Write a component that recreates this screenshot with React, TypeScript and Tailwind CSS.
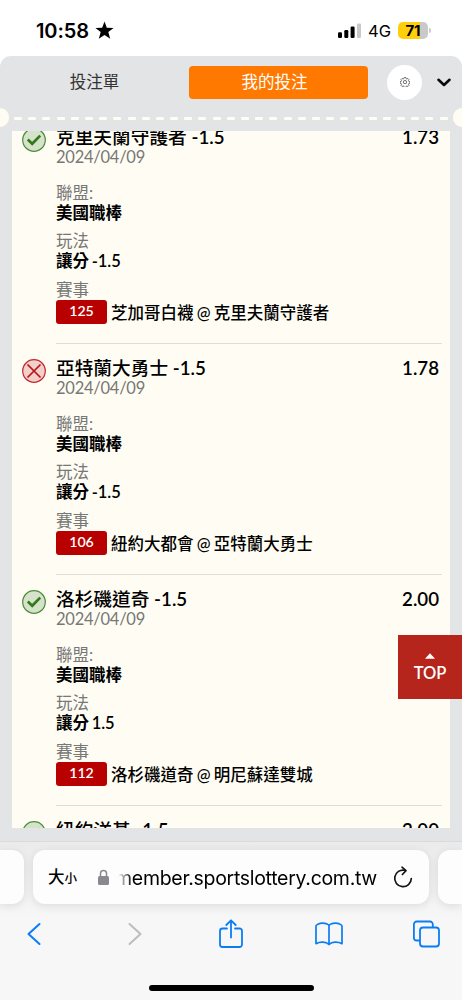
type Bet = {
  team: string;
  line: string;
  odds: string;
  won: boolean;
  play: string;
  code: string;
  match: string;
};

const bets: Bet[] = [
  { team: '克里夫蘭守護者', line: '-1.5', odds: '1.73', won: true, play: '讓分 -1.5', code: '125', match: '芝加哥白襪 @ 克里夫蘭守護者' },
  { team: '亞特蘭大勇士', line: '-1.5', odds: '1.78', won: false, play: '讓分 -1.5', code: '106', match: '紐約大都會 @ 亞特蘭大勇士' },
  { team: '洛杉磯道奇', line: '-1.5', odds: '2.00', won: true, play: '讓分 1.5', code: '112', match: '洛杉磯道奇 @ 明尼蘇達雙城' },
  { team: '紐約洋基', line: '-1.5', odds: '2.00', won: true, play: '讓分 -1.5', code: '118', match: '紐約洋基 @ 邁阿密馬林魚' },
];

const dashes = Array.from({ length: 31 }, (_, i) => i);

function StatusBar() {
  return (
    <div className="flex h-[56px] shrink-0 items-start pt-[19px] pl-[36px] font-['Inter','Noto_Sans_CJK_TC',sans-serif] text-black">
      <span className="w-[54px] text-[20px] leading-6 font-semibold tracking-[-0.1px]">10:58</span>
      <svg className="mt-[2px] ml-[5px]" width="19" height="19" viewBox="0 0 19 19">
        <path d="M9.5.4l2.300 6.300 6.800.2-5.300 4.200 1.900 6.600-5.700-3.800-5.700 3.800 1.900-6.600L.4 6.900l6.800-.2z" />
      </svg>
      <svg className="mt-[4px] ml-[224px]" width="23" height="16" viewBox="0 0 23 16">
        <rect x="0" y="9.3" width="4" height="5.7" rx="1.2" />
        <rect x="6.3" y="7" width="4" height="8" rx="1.2" />
        <rect x="12.6" y="3.6" width="4" height="11.4" rx="1.2" />
        <rect x="19" y="0.4" width="4" height="14.6" rx="1.2" fill="#c9c9cb" />
      </svg>
      <span className="ml-[7px] w-[23px] text-[16.5px] leading-6 whitespace-nowrap">4G</span>
      <span className="mt-[3px] ml-[7px] flex h-[17px] w-[30px] items-center justify-center rounded-[5px] bg-linear-to-r from-[#fecf0a] from-72% to-[#c9c9cb] to-72% pt-[1px] text-[15px] leading-4 font-bold">
        71
      </span>
      <span className="mt-[9px] ml-[1px] h-[5px] w-[2px] rounded-r-full bg-[#c9c9cb]" />
    </div>
  );
}

function SlipHeader() {
  return (
    <div className="flex h-[52px] items-center">
      <button className="w-[189px] text-center text-[16.5px] text-[#333]">投注單</button>
      <button className="h-[33px] w-[179px] rounded-[4px] bg-[#ff7900] pr-[8px] text-[16.5px] text-white">我的投注</button>
      <button className="ml-[19px] flex size-[35px] items-center justify-center rounded-full bg-white">
        <svg width="10" height="10" viewBox="0 0 20 20" fill="none" stroke="#444" strokeWidth="1.5">
          <path d="M8.4 1h3.2l.6 2.3 1.6.7 2-1.2 2.3 2.3-1.2 2 .7 1.6 2.3.6v3.2l-2.3.6-.7 1.6 1.2 2-2.3 2.3-2-1.2-1.6.7-.6 2.3H8.4l-.6-2.3-1.6-.7-2 1.2-2.3-2.3 1.2-2-.7-1.6L.1 12.5V9.3l2.3-.6.7-1.6-1.2-2 2.3-2.3 2 1.2 1.6-.7z" />
          <circle cx="10" cy="10.2" r="3.3" />
        </svg>
      </button>
      <svg className="ml-[15px]" width="14" height="9" viewBox="0 0 14 9" fill="none" stroke="#0b0b0f" strokeWidth="2.6" strokeLinecap="round" strokeLinejoin="round">
        <path d="M1.5 1.8L7 7l5.5-5.2" />
      </svg>
    </div>
  );
}

// Perforated edge of the ticket
function TearLine() {
  return (
    <div className="flex h-[19px] items-center justify-between overflow-hidden">
      <span className="h-[19px] w-[9px] shrink-0 rounded-r-full bg-[#fffdf3]" />
      <div className="mt-[2px] mr-[5px] ml-[5px] flex flex-1 justify-between">
        {dashes.map((i) => (
          <span key={i} className="h-[3px] w-[8px] rounded-[1px] bg-[#fffdf3]" />
        ))}
      </div>
      <span className="h-[19px] w-[9px] shrink-0 rounded-l-full bg-[#fffdf3]" />
    </div>
  );
}

function ResultIcon({ won }: { won: boolean }) {
  return won ? (
    <svg width="24" height="24" viewBox="0 0 24 24" fill="none">
      <circle cx="12" cy="12" r="11.3" fill="#d5e3ca" stroke="#4a8c3b" strokeWidth="1.2" />
      <path d="M5.8 11.6l4.4 4.2L18.2 7.600" stroke="#35791f" strokeWidth="2.7" />
    </svg>
  ) : (
    <svg width="24" height="24" viewBox="0 0 24 24" fill="none">
      <circle cx="12" cy="12" r="11.3" fill="#f3cfc9" stroke="#c4262b" strokeWidth="1.2" />
      <path d="M5.5 5.5l13 13M18.5 5.5l-13 13" stroke="#b8141c" strokeWidth="1.7" />
    </svg>
  );
}

function BetRow({ bet }: { bet: Bet }) {
  return (
    <div className="flex h-[231px] shrink-0 pr-[8px] pl-[10px]">
      <div className="w-[34px] shrink-0 pt-[15px]">
        <ResultIcon won={bet.won} />
      </div>
      <div className="flex-1 border-b border-[#dedddb] pt-[12px] whitespace-nowrap">
        <div className="flex justify-between pr-[3px] text-[18.7px] leading-[24px] font-semibold text-black">
          <span>
            <span className="font-medium">{bet.team}</span> {bet.line}
          </span>
          <span>{bet.odds}</span>
        </div>
        <div className="text-[16.5px] leading-[16px] tracking-[-0.25px] text-[#777]">2024/04/09</div>
        <div className="mt-[18px] text-[16.5px] leading-[20px] text-[#777]">聯盟:</div>
        <div className="text-[16.5px] leading-[21px] font-semibold text-black">美國職棒</div>
        <div className="mt-[7px] text-[16.5px] leading-[20px] text-[#777]">玩法</div>
        <div className="text-[16.5px] leading-[21px] font-semibold tracking-[-0.1px] text-black [word-spacing:-1px]">{bet.play}</div>
        <div className="mt-[8px] text-[16.5px] leading-[20px] text-[#777]">賽事</div>
        <div className="flex h-[24px] items-center gap-[4px]">
          <span className="flex h-[24px] w-[51px] items-center justify-center rounded-[3px] bg-[#b80000] pb-[2px] text-[14.2px] font-semibold text-white">
            {bet.code}
          </span>
          <span className="pt-[2px] text-[16.5px] font-medium text-black [word-spacing:-1px]">{bet.match}</span>
        </div>
      </div>
    </div>
  );
}

function AddressBar() {
  return (
    <div className="flex h-[54px] justify-between">
      <div className="w-[24px] rounded-r-[12px] bg-[#fdfdfd] shadow-[0_2px_10px_rgba(0,0,0,0.1)]" />
      <div className="flex w-[396px] items-center rounded-[12px] bg-[#fdfdfd] pl-[15px] text-black shadow-[0_2px_10px_rgba(0,0,0,0.1)]">
        <span className="w-[50px] font-['Noto_Sans_CJK_TC',sans-serif] text-[16.5px] leading-6 font-medium">
          大<span className="text-[12.5px]">小</span>
        </span>
        <svg width="11" height="17" viewBox="0 0 11 17">
          <path d="M2.5 8V4.5a3 3 0 016 0V8" fill="none" stroke="#8a8a8e" strokeWidth="1.5" />
          <rect x="0" y="7" width="11" height="9" rx="1.5" fill="#8a8a8e" />
        </svg>
        <div className="ml-[9px] flex w-[259px] justify-end overflow-hidden mask-[linear-gradient(to_right,transparent,black_14px)] pt-[2px] font-['Inter',sans-serif] text-[19.5px] leading-7 tracking-[-0.3px] whitespace-nowrap">
          member.sportslottery.com.tw
        </div>
        <svg className="ml-[16px]" width="20" height="23" viewBox="0 0 20 23" fill="none" stroke="#151515" strokeWidth="1.7" strokeLinecap="round" strokeLinejoin="round">
          <path d="M12 4.3A8.3 8.3 0 1018.300 12.500" />
          <path d="M9 1.200l4 3.400-3.600 3.900" />
        </svg>
      </div>
      <div className="w-[24px] rounded-l-[12px] bg-[#fdfdfd] shadow-[0_2px_10px_rgba(0,0,0,0.1)]" />
    </div>
  );
}

function Toolbar() {
  return (
    <div className="flex h-[60px] items-center justify-between pr-[20px] pl-[19px]">
      <svg width="30" height="30" viewBox="0 0 30 30" fill="none" stroke="#0a7df5" strokeWidth="2" strokeLinecap="round" strokeLinejoin="round">
        <path d="M20.500 5L9.500 15l11 10" />
      </svg>
      <svg width="30" height="30" viewBox="0 0 30 30" fill="none" stroke="#bdbdbf" strokeWidth="2" strokeLinecap="round" strokeLinejoin="round">
        <path d="M12.500 5l11 10-11 10" />
      </svg>
      <svg width="30" height="30" viewBox="0 0 30 30" fill="none" stroke="#0a7df5" strokeWidth="1.8" strokeLinecap="round" strokeLinejoin="round">
        <path d="M11 9.500H6.500a2.500 2.500 0 00-2.500 2.500v13.500a2.500 2.500 0 002.500 2.500h17a2.500 2.500 0 002.500-2.500V12a2.500 2.500 0 00-2.500-2.500H19" />
        <path d="M15 18.500V1.500M10.300 6L15 1.300 19.700 6" />
      </svg>
      <svg width="30" height="30" viewBox="0 0 30 30" fill="none" stroke="#0a7df5" strokeWidth="1.7" strokeLinecap="round" strokeLinejoin="round">
        <path d="M15 25.500c-3-3-9-3-13-.8V7c0-1 3-2.800 6.500-2.800S15 5.500 15 7c0-1.500 3-2.800 6.500-2.800S28 6 28 7v17.700c-4-2.200-10-2.200-13 .8zM15 7v18.500" />
      </svg>
      <svg width="30" height="30" viewBox="0 0 30 30" fill="none" stroke="#0a7df5" strokeWidth="1.8" strokeLinejoin="round">
        <rect x="8" y="8.500" width="19" height="19" rx="3" />
        <path d="M8 21.500H4.700a2.800 2.800 0 01-2.800-2.800V5.300a2.800 2.800 0 012.800-2.800H18a2.800 2.800 0 012.800 2.800v3.200" />
      </svg>
    </div>
  );
}

export default function App() {
  return (
    <div className="relative flex h-[1000px] w-[462px] flex-col overflow-hidden bg-white font-['Lato','Noto_Sans_CJK_TC',sans-serif] text-[#0b0b0f]">
      <StatusBar />
      <main className="flex h-[785px] shrink-0 flex-col rounded-t-[11px] bg-[#e3e4e6]">
        <SlipHeader />
        <TearLine />
        <div className="mx-[12px] mt-[4px] h-[697px] overflow-hidden bg-[#fffdf3]">
          <div className="-mt-[18px] flex flex-col">
            {bets.map((bet) => (
              <BetRow key={bet.code} bet={bet} />
            ))}
          </div>
        </div>
      </main>
      <footer className="flex flex-1 flex-col overflow-hidden border-t border-[#d9dadc] bg-linear-to-b from-[#ebebec] to-[#f7f7f7] to-50% pt-[8px]">
        <AddressBar />
        <Toolbar />
        <div className="mx-auto mt-[21px] h-[6px] w-[165px] rounded-full bg-black" />
      </footer>
      <button className="absolute top-[635px] right-0 flex h-[64px] w-[64px] flex-col items-center bg-[#b5251c] pt-[18px] text-[16.5px] leading-[24px] text-white">
        <svg width="10" height="6" viewBox="0 0 10 6" fill="currentColor">
          <path d="M5 0.3L10 5.700H0z" />
        </svg>
        <span className="mt-[2px] font-semibold">TOP</span>
      </button>
    </div>
  );
}
